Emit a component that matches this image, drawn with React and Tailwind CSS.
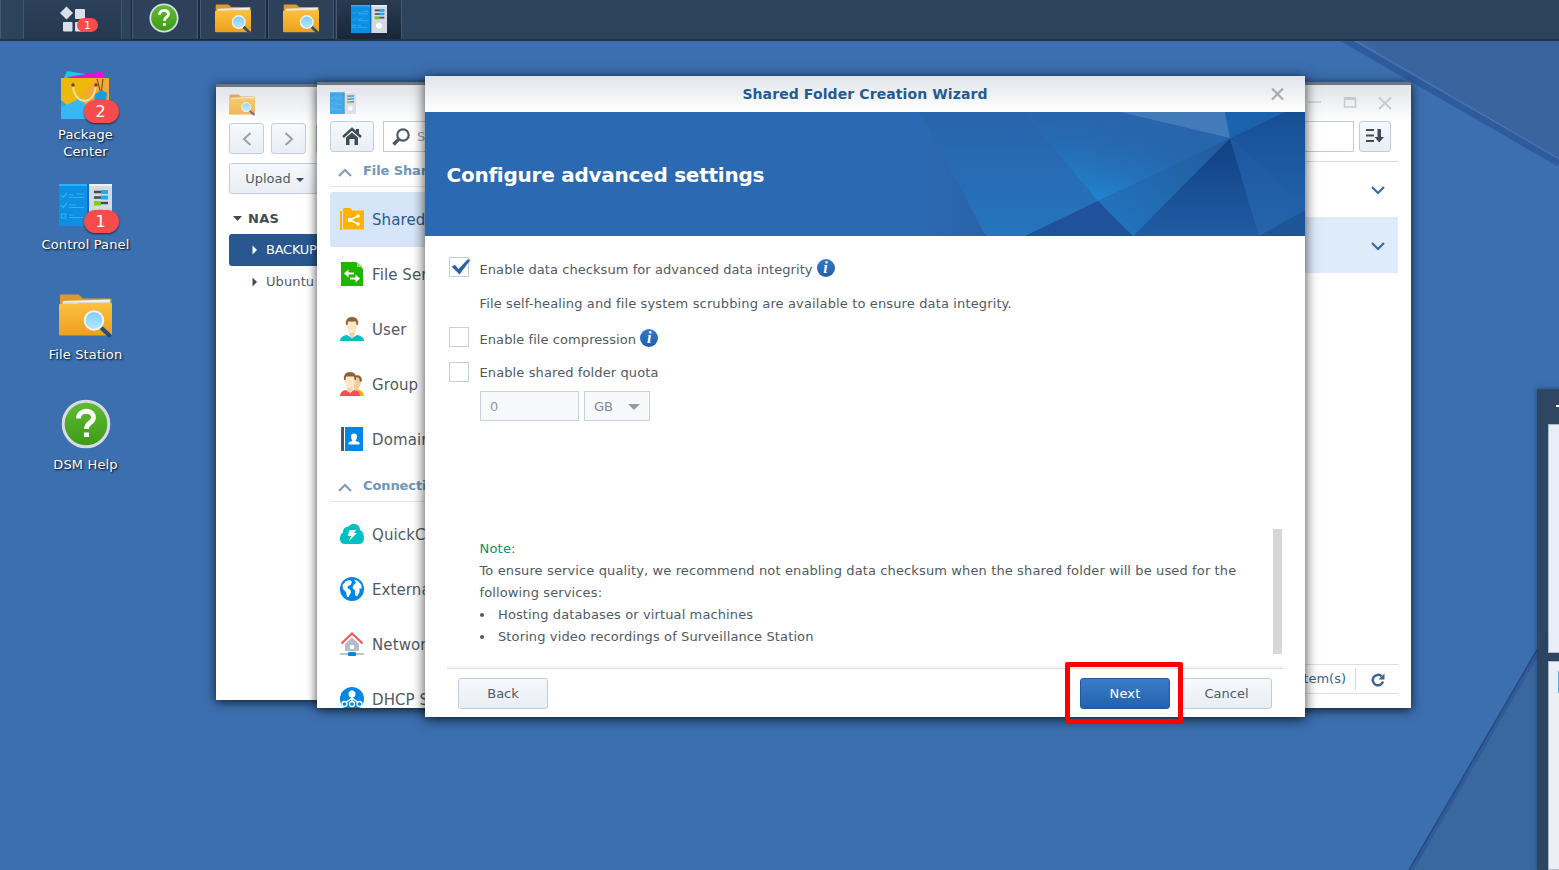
import React from "react";

function FolderIcon({ className }) {
  return (
    <svg className={className} viewBox="0 0 53 44">
      <defs>
        <linearGradient id="fold" x1="0" y1="0" x2="0" y2="1">
          <stop offset="0" stopColor="#fcc13f" />
          <stop offset="1" stopColor="#ee9f1d" />
        </linearGradient>
        <linearGradient id="lens" x1="0" y1="0" x2="0" y2="1">
          <stop offset="0" stopColor="#7cccfb" />
          <stop offset="1" stopColor="#b5e9ff" />
        </linearGradient>
      </defs>
      <path d="M1 1.500Q1 .5 2 .5H19.5L24 4.5H51.500Q52.500 4.500 52.500 5.500V20H1Z" fill="#dc9a2c" />
      <path d="M4 7L51 5.500V14H3Z" fill="#f4f1ea" />
      <path d="M5 9H51" stroke="#b9b6ae" strokeWidth=".7" />
      <path d="M0 11Q0 10 1 10H17L21 9H52Q53 9 53 10V40Q53 41.500 51.500 41.500H1.500Q0 41.500 0 40Z" fill="url(#fold)" />
      <path d="M43 34.500L50.500 41.500" stroke="#244f72" strokeWidth="4" strokeLinecap="round" />
      <circle cx="35" cy="26.500" r="9.300" fill="url(#lens)" stroke="#f3f3f3" strokeWidth="1.900" />
    </svg>
  );
}

function PanelIcon({ className }) {
  return (
    <svg className={className} viewBox="0 0 53 42" preserveAspectRatio="none">
      <rect width="30" height="42" fill="#0d8fe4" />
      <rect width="30" height="2" fill="#28b4f6" />
      <path d="M28 0H30V42H28Z" fill="#0a6cc0" />
      <g stroke="#2ab4f2" strokeWidth="1.200" fill="none">
        <path d="M2 11L4 13.500L8 9M10 11H15M10 13.500H25M17 10H25M2 21L4 23.500L8 19M10 21H17M10 23.500H25M2.500 30H6.500V34H2.500ZM10 31H15M10 33.500H24" />
      </g>
      <rect x="30" width="23" height="42" fill="#d5d9e2" />
      <rect x="30" width="23" height="2" fill="#eef0f4" />
      <path d="M35 8H49M35 13.500H49M35 19H49" stroke="#424b57" strokeWidth="2.500" />
      <path d="M42 8H49M42 13.500H49" stroke="#19b0ef" strokeWidth="4" />
      <path d="M35 19.500H42" stroke="#77cf13" strokeWidth="4" />
      <circle cx="41.500" cy="31" r="5.500" fill="#fff" stroke="#b9c0ca" />
    </svg>
  );
}

function HelpIcon({ className }) {
  return (
    <svg className={className} viewBox="0 0 50 50">
      <defs>
        <linearGradient id="hg" x1="0" y1="0" x2="0" y2="1">
          <stop offset="0" stopColor="#62bb33" />
          <stop offset="1" stopColor="#3d9a17" />
        </linearGradient>
      </defs>
      <circle cx="25" cy="25" r="22.800" fill="url(#hg)" stroke="#d5dce5" strokeWidth="3" />
      <path d="M17.500 19.500C17.500 10 32.500 10 32.500 18.500C32.500 24 25.500 23.500 25.500 30" fill="none" stroke="#fff" strokeWidth="4.800" />
      <rect x="23" y="33.500" width="5" height="4.500" fill="#fff" />
    </svg>
  );
}

function PackageIcon({ className }) {
  return (
    <svg className={className} viewBox="0 0 50 50">
      <path d="M4 8L7 1L26 4V12H4Z" fill="#25c2ee" />
      <path d="M8 7L43 1.500L45 9H8Z" fill="#e012d5" />
      <path d="M1 8H49V49H1Z" fill="#edb90c" />
      <path d="M36 8H49V49H34L20 28Z" fill="#f6a835" />
      <path d="M1 37L24 27L40 49H1Z" fill="#f0bd10" />
      <path d="M1 30L24 49H1Z" fill="#2cabf0" />
      <path d="M1 38L20 28L38 49H1Z" fill="#38b6f6" />
      <path d="M13 15C14 36 35 36 36 15" fill="none" stroke="#f8dfae" strokeWidth="1.800" />
      <circle cx="13" cy="15" r="1.700" fill="#6b430d" />
      <circle cx="36" cy="15" r="1.700" fill="#6b430d" />
      <path d="M37 9L41 24M43 9L41 24" stroke="#5c4523" strokeWidth="1" fill="none" />
      <path d="M35 24L42 20L47 23L46 34L34 32Z" fill="#189fd8" />
    </svg>
  );
}

function Badge({ children }) {
  return (
    <span className="absolute top-[38px] left-[84px] flex h-[23px] w-[35px] items-center justify-center rounded-full bg-[#f84c4c] pr-[2px] text-[16px] leading-none text-white shadow-[0_1px_2px_rgba(0,0,0,0.6)]">
      {children}
    </span>
  );
}

function DesktopIcon({ icon, label, badge }) {
  return (
    <div className="relative flex h-[110px] w-[171px] flex-col items-center">
      <div className="flex h-[64px] shrink-0 items-center">{icon}</div>
      <div className="w-[100px] text-center text-[13px] leading-[17px] tracking-[0.13px] text-white [text-shadow:1px_1px_2px_rgba(0,0,0,0.95)]">{label}</div>
      {badge && <Badge>{badge}</Badge>}
    </div>
  );
}

function Taskbar() {
  const task = "flex w-[66px] items-center justify-center border-x border-[#46596f] bg-[#2d415b] shadow-[0_0_0_1px_#182a3f]";
  return (
    <header className="flex h-[41px] border-b-2 border-[#20344b] bg-[#2d425b]">
      <div className="w-[23px] border-l border-[#455970]" />
      <div className="relative w-[99px] border-x border-[#43566c] bg-linear-to-b from-[#2d405a] to-[#26384d]">
        <svg className="absolute top-[6px] left-[36px] h-[26px] w-[27px]" viewBox="0 0 27 26">
          <g fill="#d9e0e9">
            <path d="M6.500 .5L13 7L6.500 13.500L0 7Z" />
            <rect x="15" y="3" width="10" height="10" rx="1" />
            <rect x="3" y="16" width="9.500" height="9.500" rx="1" />
            <rect x="15" y="16" width="10" height="9.500" rx="1" />
          </g>
        </svg>
        <span className="absolute top-[18px] left-[53px] flex h-[14px] w-[21px] items-center justify-center rounded-full bg-[#f84c4c] text-[11px] leading-none text-white">1</span>
      </div>
      <div className="ml-[10px] flex gap-[2px]">
        <div className={task}><HelpIcon className="mr-[2px] mb-[3px] h-[30px] w-[30px]" /></div>
        <div className={task}><FolderIcon className="mb-[2px] h-[30px] w-[36px]" /></div>
        <div className={task}><FolderIcon className="mb-[2px] h-[30px] w-[36px]" /></div>
        <div className="flex w-[66px] items-center justify-center border-x border-[#46596f] bg-linear-to-b from-[#2a3b52] to-[#192638]"><PanelIcon className="mb-px h-[28px] w-[36px]" /></div>
      </div>
    </header>
  );
}

const btn = "flex shrink-0 items-center justify-center rounded-[3px] border border-[#c0cddb] bg-linear-to-b from-[#f6f9fd] to-[#e9eef4]";

function FileStationWindow() {
  return (
    <section className="absolute top-[84px] left-[216px] flex h-[616px] w-[700px] flex-col border-t-[3px] border-[#6e7680] bg-white bg-linear-to-b from-[#e0e3e8] to-white to-[36px] pl-[13px] shadow-[0_2px_10px_rgba(0,0,0,0.75)]">
      <div className="flex h-[36px] items-center">
        <FolderIcon className="h-[22px] w-[26px] opacity-75" />
      </div>
      <div className="flex gap-[7px]">
        <div className={btn + " h-[31px] w-[35px]"}>
          <svg className="h-[14px] w-[10px]" viewBox="0 0 10 14"><path d="M8.500 1L2 7L8.500 13" fill="none" stroke="#9aa3ad" strokeWidth="2" /></svg>
        </div>
        <div className={btn + " h-[31px] w-[35px]"}>
          <svg className="h-[14px] w-[10px]" viewBox="0 0 10 14"><path d="M1.500 1L8 7L1.500 13" fill="none" stroke="#9aa3ad" strokeWidth="2" /></svg>
        </div>
        <div className={btn + " ml-[3px] h-[31px] w-[35px]"} />
      </div>
      <div className={btn + " mt-[9px] h-[31px] w-[92px] gap-[5px] pr-px text-[13px] text-[#505a64]"}>
        <span>Upload</span>
        <svg className="mt-[2px] h-[4px] w-[8px]" viewBox="0 0 8 4"><path d="M0 0H8L4 4Z" fill="#414b55" /></svg>
      </div>
      <div className="mt-[8px] flex h-[32px] items-center gap-[6px] pl-[4px] font-bold text-[#414b55]">
        <svg className="h-[5px] w-[9px]" viewBox="0 0 9 5"><path d="M0 0H9L4.500 5Z" fill="#414b55" /></svg>
        <span className="pt-[2px] text-[13px] tracking-[0.3px]">NAS</span>
      </div>
      <div className="flex h-[32px] w-[200px] items-center gap-[6px] rounded-[3px] bg-[#28588f] pl-[21px] text-[13px] tracking-[-0.25px] text-white">
        <svg className="h-[10px] w-[10px]" viewBox="0 0 10 10"><path d="M2.500 .5L7 5L2.500 9.500Z" fill="#fff" /></svg>
        <span>BACKUP</span>
      </div>
      <div className="flex h-[32px] items-center gap-[6px] pl-[21px] text-[13px] tracking-[0.1px] text-[#505a64]">
        <svg className="h-[10px] w-[10px]" viewBox="0 0 10 10"><path d="M2.500 .5L7 5L2.500 9.500Z" fill="#414b55" /></svg>
        <span>Ubuntu</span>
      </div>
    </section>
  );
}

const navIcons = {
  shared: (
    <>
      <path d="M0 4H2V23H0Z" fill="#ffb200" />
      <path d="M3 2Q3 1 4 1H10L12.500 3.500H24V22.500H3Z" fill="#ffb200" />
      <path d="M18 9L10 13L18 17" stroke="#fff" strokeWidth="1.600" fill="none" />
      <circle cx="10" cy="13" r="2.300" fill="#fff" /><circle cx="18" cy="9" r="1.800" fill="#fff" /><circle cx="18" cy="17" r="1.800" fill="#fff" />
    </>
  ),
  file: (
    <>
      <path d="M1 0H16L23 7V24H1Z" fill="#1fb600" />
      <path d="M17 0L23 5H17Z" fill="#8ddb80" />
      <path d="M4 11.500L8.500 7.500V10.500H14V12.500H8.500V15.500ZM20 16.500L15.500 12.500V15.500H10V17.500H15.500V20.500Z" fill="#fff" />
    </>
  ),
  user: (
    <>
      <path d="M0 24Q0 19 7 18L12 21L17 18Q24 19 24 24Z" fill="#00bfc2" />
      <path d="M9 14H15V18L12 21.500L9 18Z" fill="#f5d5b0" />
      <path d="M7 5Q7 2 12 2Q17 2 17 5V10Q16 16 12 16Q8 16 7 10Z" fill="#ffe6c8" />
      <path d="M6 8Q5 0 12 0Q19 0 18 8L16.500 8L16 4.500H8L7.500 8Z" fill="#8c6239" />
    </>
  ),
  group: (
    <>
      <path d="M14 24L17 17Q24 19 24 24Z" fill="#ffb200" />
      <path d="M13 5Q21 1 21 9Q20 16 17 18H14Z" fill="#f2cd9f" />
      <path d="M13 4Q22 1 22 9L20 10L19 6Z" fill="#8c6239" />
      <path d="M0 24Q0 19 6 18L10 21L14 18Q20 19 20 24Z" fill="#fb4b53" />
      <path d="M7 13H13V18L10 21.500L7 18Z" fill="#f5d5b0" />
      <path d="M5 5Q5 2 10 2Q15 2 15 5V10Q14 16 10 16Q6 16 5 10Z" fill="#ffe6c8" />
      <path d="M4 8Q3 0 10 0Q17 0 16 8L14.500 8L14 4.500H6L5.500 8Z" fill="#8c6239" />
    </>
  ),
  domain: (
    <>
      <path d="M1 0H4V24H1Z" fill="#4b5763" />
      <path d="M5 0H23V24H5Z" fill="#0086e5" />
      <path d="M8.500 17.500V15.500Q9 14.500 12.500 14Q11 12 11 9.500Q11 6.500 14 6.500Q17 6.500 17 9.500Q17 12 15.500 14Q19 14.500 19.500 15.500V17.500Z" fill="#fff" />
    </>
  ),
  quick: (
    <>
      <path d="M5 22Q0 22 0 16.500Q0 12 3 10.500Q3 5 8.500 4.500Q11 1 15 2Q20 3 20 8Q24 10 24 16Q24 22 18.500 22Z" fill="#00bfc2" />
      <path d="M9.500 8H16L14 11H17L9 19L11 14H7.500Z" fill="#fff" />
    </>
  ),
  globe: (
    <>
      <circle cx="12" cy="12" r="12" fill="#0086e5" />
      <path d="M2.500 8L6 4L10 3L12 5L10.500 8L8 9L7.500 11L10.500 13L11 15.500L8.500 20L7 20L6 15L3 12ZM14 2.500L18 4L21.500 8L21.500 12L19.500 11L19.500 15L17 19.500L15 18L15 13.500L12.500 11L13.500 8L16 6Z" fill="#fff" />
    </>
  ),
  network: (
    <>
      <path d="M5 12L12 5.500L19 12V19H5Z" fill="#b4bdc8" />
      <path d="M10 13H14V17H10Z" fill="#fff" />
      <path d="M1.500 11.500L12 1.500L22.500 11.500" fill="none" stroke="#fb555b" strokeWidth="2" />
      <path d="M0 22H24" stroke="#a6b2bf" strokeWidth="1.500" />
      <rect x="8" y="20" width="8" height="4" rx="1" fill="#0086e5" />
    </>
  ),
  dhcp: (
    <>
      <circle cx="12" cy="12" r="12" fill="#0086e5" />
      <path d="M12 8V17M12 11L4 17M12 11L20 17" stroke="#fff" strokeWidth="1.500" />
      <circle cx="12" cy="7" r="3.500" fill="#fff" />
      <g fill="#0086e5" stroke="#fff" strokeWidth="1.300"><circle cx="4.500" cy="17" r="2.500" /><circle cx="12" cy="17" r="2.500" /><circle cx="19.500" cy="17" r="2.500" /></g>
    </>
  ),
};

function NavItem({ icon, label, active }) {
  return (
    <div className={active ? "flex h-[55px] items-center gap-[8px] rounded-[3px] bg-[#d6e6f8] pl-[10px] text-[15px] text-[#28588f]" : "flex h-[55px] items-center gap-[8px] pl-[10px] text-[15px] text-[#505a64]"}>
      <svg className="mb-px h-[24px] w-[24px] shrink-0" viewBox="0 0 24 24">{navIcons[icon]}</svg>
      <span className="overflow-hidden pt-[2px] tracking-[0.1px] whitespace-nowrap">{label}</span>
    </div>
  );
}

function NavHeader({ children }) {
  return (
    <div className="flex h-[35px] shrink-0 items-center gap-[11px] border-b border-[#e2e6ea] pl-[8px] text-[13px] font-bold tracking-[-0.1px] text-[#6e96bd]">
      <svg className="mt-[6px] h-[9px] w-[14px] shrink-0" viewBox="0 0 14 9"><path d="M1 8L7 2L13 8" fill="none" stroke="#7e9ab8" strokeWidth="2" /></svg>
      <span className="overflow-hidden pt-[3px] whitespace-nowrap">{children}</span>
    </div>
  );
}

function Chevron() {
  return (
    <svg className="mt-[2px] h-[9px] w-[14px]" viewBox="0 0 14 9"><path d="M1 1L7 7L13 1" fill="none" stroke="#3665a0" strokeWidth="2" /></svg>
  );
}

function ControlPanelWindow() {
  return (
    <section className="absolute top-[82px] left-[317px] flex h-[626px] w-[1094px] flex-col overflow-hidden border-t-[3px] border-[#6e7680] bg-white bg-linear-to-b from-[#e0e3e8] to-white to-[36px] px-[13px]">
      <div className="flex h-[36px] shrink-0 items-center justify-between">
        <PanelIcon className="mb-px h-[22px] w-[26px] opacity-75" />
        <div className="flex items-center gap-[21px] pr-[6px]">
          <svg className="h-[14px] w-[14px]" viewBox="0 0 14 14"><path d="M0 6H13" stroke="#c8cacd" strokeWidth="1.500" /></svg>
          <svg className="h-[14px] w-[14px]" viewBox="0 0 14 14"><path d="M1.500 2V11H12.500V2Z" fill="none" stroke="#c8cacd" strokeWidth="1.500" /><path d="M1 2.500H13" stroke="#c8cacd" strokeWidth="3" /></svg>
          <svg className="h-[13px] w-[14px]" viewBox="0 0 14 13"><path d="M1 .5L13 12M13 .5L1 12" stroke="#c8cacd" strokeWidth="2" /></svg>
        </div>
      </div>
      <div className="flex h-[31px] shrink-0 items-center">
        <div className={btn + " h-[31px] w-[44px]"}>
          <svg className="h-[19px] w-[20px]" viewBox="0 0 20 19">
            <path d="M1 10L10 2L19 10" fill="none" stroke="#414b55" strokeWidth="2.500" />
            <path d="M14 2H17V7L14 4.500ZM4 10.500L10 5.500L16 10.500V18H12.500V12H7.500V18H4Z" fill="#414b55" />
          </svg>
        </div>
        <div className="ml-[9px] flex h-[31px] w-[971px] items-center gap-[7px] border border-[#c0cad6] bg-white pl-[8px] text-[13px] text-[#9aa3ad]">
          <svg className="h-[18px] w-[18px]" viewBox="0 0 18 18"><circle cx="11" cy="7" r="5.700" fill="none" stroke="#505a64" strokeWidth="2.200" /><path d="M7 11L1.500 16.500" stroke="#505a64" strokeWidth="3.500" /></svg>
          <span className="pt-px">Search</span>
        </div>
        <div className={btn + " ml-[5px] h-[31px] w-[32px]"}>
          <svg className="mr-px mb-[2px] h-[15px] w-[18px]" viewBox="0 0 18 15"><path d="M0 2H8M0 7.500H8M0 13H8" stroke="#414b55" strokeWidth="2" /><path d="M11.500 1H15V9H18L13.200 14.500L8.500 9H11.500Z" fill="#414b55" /></svg>
        </div>
      </div>
      <div className="flex min-h-0 flex-1">
        <nav className="flex w-[140px] flex-col">
          <NavHeader>File Sharing</NavHeader>
          <div className="mt-[5px]">
            <NavItem icon="shared" label="Shared Folder" active />
            <NavItem icon="file" label="File Services" />
            <NavItem icon="user" label="User" />
            <NavItem icon="group" label="Group" />
            <NavItem icon="domain" label="Domain/LDAP" />
          </div>
          <NavHeader>Connectivity</NavHeader>
          <div className="mt-[5px]">
            <NavItem icon="quick" label="QuickConnect" />
            <NavItem icon="globe" label="External Access" />
            <NavItem icon="network" label="Network" />
            <NavItem icon="dhcp" label="DHCP Server" />
          </div>
        </nav>
        <div className="mt-[9px] flex flex-1 flex-col border-t border-[#d3dce6]">
          <div className="flex h-[55px] items-center justify-end pr-[13px]"><Chevron /></div>
          <div className="flex h-[56px] items-center justify-end bg-[#deebfa] pr-[13px]"><Chevron /></div>
          <div className="mt-auto mb-[14px] flex h-[30px] items-center justify-end border-y border-[#d8e0e9] pr-[13px] text-[13px] text-[#365f93]">
            <span>2 item(s)</span>
            <span className="mr-[15px] ml-[9px] h-[22px] w-px bg-[#d0dae6]" />
            <svg className="mt-[2px] h-[14px] w-[14px]" viewBox="0 0 14 14"><path d="M12 8.500A5.200 5.200 0 1 1 10.500 3.200" fill="none" stroke="#3b6394" strokeWidth="2.500" /><path d="M13.500 .5V6.500H7.500Z" fill="#3b6394" /></svg>
          </div>
        </div>
      </div>
    </section>
  );
}

function BannerArt() {
  return (
    <svg className="absolute inset-y-0 right-0 h-[124px] w-[425px]" viewBox="0 0 425 124">
      <defs>
        <linearGradient id="b1" x1="0" y1="0" x2="0" y2="1"><stop offset="0" stopColor="#2963aa" /><stop offset="1" stopColor="#2575bf" /></linearGradient>
        <linearGradient id="b2" gradientUnits="userSpaceOnUse" x1="290" y1="0" x2="218" y2="89"><stop offset=".2" stopColor="#2466ad" /><stop offset="1" stopColor="#1f86d0" /></linearGradient>
        <linearGradient id="b2fade" gradientUnits="userSpaceOnUse" x1="145" y1="0" x2="145" y2="89"><stop offset="0" stopColor="#2865ac" /><stop offset=".3" stopColor="#2865ac" stopOpacity=".8" /><stop offset="1" stopColor="#2865ac" stopOpacity="0" /></linearGradient>
        <linearGradient id="b3" x1="1" y1="0" x2="0" y2="1"><stop offset="0" stopColor="#24599b" /><stop offset="1" stopColor="#2177c2" /></linearGradient>
        <linearGradient id="b4" x1="0" y1="0" x2="0" y2="1"><stop offset="0" stopColor="#104086" /><stop offset="1" stopColor="#205ca2" /></linearGradient>
        <linearGradient id="b5" x1="0" y1="0" x2="0" y2="1"><stop offset="0" stopColor="#1d579e" /><stop offset="1" stopColor="#2465ac" /></linearGradient>
        <linearGradient id="b6" x1="0" y1="0" x2="1" y2="0"><stop offset="0" stopColor="#2c6bb4" stopOpacity="0" /><stop offset="1" stopColor="#2961a7" /></linearGradient>
        <linearGradient id="b7" x1="0" y1="0" x2="0" y2="1"><stop offset="0" stopColor="#174f94" /><stop offset="1" stopColor="#2062aa" /></linearGradient>
      </defs>
      <path d="M0 0H40L106 124H0Z" fill="url(#b6)" />
      <path d="M40 0H240L350 26L218 89L145 124H106Z" fill="url(#b1)" />
      <path d="M145 0H240L350 26L218 89Z" fill="url(#b2)" />
      <path d="M145 0H240L350 26L218 89Z" fill="url(#b2fade)" />
      <path d="M240 0H345L350 26Z" fill="#427bb8" />
      <path d="M345 0H405L350 26Z" fill="#1c63af" />
      <path d="M405 0H425V98L350 26Z" fill="url(#b7)" />
      <path d="M350 26L425 98L379 124Z" fill="url(#b5)" />
      <path d="M425 98V124H379Z" fill="#1d5696" />
      <path d="M350 26L379 124H253Z" fill="url(#b4)" />
      <path d="M350 26L253 124L218 89Z" fill="url(#b3)" />
      <path d="M218 89L253 124H145Z" fill="#1f529a" />
    </svg>
  );
}

function Checkbox({ checked }) {
  return (
    <span className="flex h-[20px] w-[20px] shrink-0 border border-[#c6d0db] bg-white">
      {checked && (
        <svg className="h-[19px] w-[21px] shrink-0" viewBox="0 0 21 19"><path d="M1.500 8.500L5 7L8.500 11L17.500 1.500L20.500 1.800L9.500 16.500Z" fill="#2863a4" /></svg>
      )}
    </span>
  );
}

function InfoIcon() {
  return (
    <span className="mb-[4px] flex h-[18px] w-[18px] items-center justify-center rounded-full bg-linear-to-b from-[#3578c8] to-[#1f5eae] font-['Liberation_Serif',serif] text-[16px] leading-none font-bold text-white italic">i</span>
  );
}

function Wizard() {
  return (
    <section className="absolute top-[76px] left-[425px] flex h-[641px] w-[880px] flex-col bg-white text-[13px] text-[#505a64] shadow-[0_2px_12px_rgba(0,0,0,0.75)]">
      <div className="relative flex h-[36px] shrink-0 items-center justify-center bg-linear-to-b from-[#e0e4ea] to-white text-[14px] font-bold text-[#275a93]">
        <span className="tracking-[0.1px]">Shared Folder Creation Wizard</span>
        <svg className="absolute top-[12px] right-[21px] h-[13px] w-[13px]" viewBox="0 0 13 13"><path d="M1 .5L12 11.500M12 .5L1 11.500" stroke="#a8acb1" strokeWidth="2.200" /></svg>
      </div>
      <div className="relative flex h-[124px] shrink-0 items-center bg-[#2b6ab3] pl-[21.500px]">
        <BannerArt />
        <h1 className="relative pt-[2px] text-[20px] font-bold tracking-[-0.25px] text-white">Configure advanced settings</h1>
      </div>
      <div className="flex flex-1 flex-col px-[22px]">
        <div className="mt-[20px] flex h-[22px] items-center gap-[10.500px] pl-[2px]">
          <Checkbox checked />
          <div className="flex items-center gap-[4px] pt-[5px]"><span className="tracking-[0.07px]">Enable data checksum for advanced data integrity</span><InfoIcon /></div>
        </div>
        <p className="mt-[16px] pl-[32.500px] leading-[20px] tracking-[0.137px]">File self-healing and file system scrubbing are available to ensure data integrity.</p>
        <div className="mt-[12px] flex h-[22px] items-center gap-[10.500px] pl-[2px]">
          <Checkbox />
          <div className="flex items-center gap-[4px] pt-[5px]"><span className="tracking-[0.08px]">Enable file compression</span><InfoIcon /></div>
        </div>
        <div className="mt-[13px] flex h-[22px] items-center gap-[10.500px] pl-[2px]">
          <Checkbox />
          <span className="pt-[2px] tracking-[0.11px]">Enable shared folder quota</span>
        </div>
        <div className="mt-[8px] flex gap-[5px] pl-[33px] text-[#9299a2]">
          <div className="flex h-[30px] w-[99px] items-center border border-[#c4d0dd] bg-[#f6f8fa] pt-[2px] pl-[9px]">0</div>
          <div className="flex h-[30px] w-[66px] items-center justify-between border border-[#c4d0dd] bg-[#f6f8fa] pt-px pr-[9px] pl-[9px]">
            <span className="pt-px text-[#808891]">GB</span>
            <svg className="h-[6px] w-[12px]" viewBox="0 0 12 6"><path d="M0 0H12L6 6Z" fill="#929ca7" /></svg>
          </div>
        </div>
        <div className="mt-[108px] flex h-[125px] justify-between pl-[32.500px]">
          <div className="pt-[9px] leading-[22px]">
            <p className="tracking-[0.2px] text-[#089064]">Note:</p>
            <p className="w-[775px] tracking-[0.123px]">To ensure service quality, we recommend not enabling data checksum when the shared folder will be used for the following services:</p>
            <ul className="tracking-[0.12px]">
              <li className="flex items-center gap-[14px] pl-[.5px]"><span className="h-[4px] w-[4px] rounded-full bg-[#505a64]" />Hosting databases or virtual machines</li>
              <li className="flex items-center gap-[14px] pl-[.5px]"><span className="h-[4px] w-[4px] rounded-full bg-[#505a64]" />Storing video recordings of Surveillance Station</li>
            </ul>
          </div>
          <div className="mr-px w-[9px] bg-[#d6d7d9]" />
        </div>
        <footer className="mt-[12px] border-t-2 border-[#f5f5f6]">
          <div className="flex border-t border-[#d9dbdd] px-[11px] pt-[9px]">
            <button className={btn + " h-[31px] w-[90px]"}>Back</button>
            <button className="ml-auto h-[31px] w-[90px] rounded-[3px] border border-[#205a9d] bg-linear-to-b from-[#3a7dca] to-[#2362ab] tracking-[0.2px] text-white">Next</button>
            <button className={btn + " ml-[11px] h-[31px] w-[91px]"}>Cancel</button>
          </div>
        </footer>
      </div>
    </section>
  );
}

export default function App() {
  return (
    <main className="relative h-[870px] w-[1559px] overflow-hidden bg-[#3c6eb0] font-['DejaVu_Sans',Verdana,sans-serif]">
      <svg className="absolute inset-0 h-full w-full" viewBox="0 0 1559 870">
        <defs>
          <pattern id="grain" width="4" height="4" patternUnits="userSpaceOnUse"><path d="M0 0H1V1H0ZM2 2H3V3H2Z" fill="#327aa9" opacity=".3" /></pattern>
        </defs>
        <rect width="1559" height="870" fill="url(#grain)" />
        <path d="M1288 0H1559V158Z" fill="#3a649e" />
        <path d="M1276 0L1559 163" stroke="#2f5b9d" strokeWidth="7" />
        <path d="M1284 0L1559 159" stroke="#4f77ad" strokeWidth="1" />
        <path d="M1409 870L1559 612V870Z" fill="#3b679f" />
        <path d="M1411.500 870L1559 616" stroke="#315b98" strokeWidth="4" />
        <path d="M1409 870L1559 612" stroke="#274b7e" strokeWidth="1.500" />
      </svg>
      <div className="relative"><Taskbar /></div>
      <div className="relative mt-[21px] flex w-[171px] flex-col">
        <DesktopIcon icon={<PackageIcon className="mt-[2px] mr-[2px] h-[50px] w-[50px]" />} label={<>Package<br />Center</>} badge="2" />
        <DesktopIcon icon={<PanelIcon className="mt-[2px] h-[42px] w-[53px]" />} label="Control Panel" badge="1" />
        <DesktopIcon icon={<FolderIcon className="mt-[3px] h-[44px] w-[53px]" />} label="File Station" />
        <DesktopIcon icon={<HelpIcon className="h-[50px] w-[50px]" />} label="DSM Help" />
      </div>
      <aside className="absolute top-[389px] left-[1537px] flex h-[481px] w-[100px] flex-col bg-[#2d435e]/95 pl-[11px] shadow-[0_0_5px_rgba(20,40,70,0.5)]">
        <div className="flex h-[35px] items-center pl-[8px] text-white">
          <svg className="h-[10px] w-[10px]" viewBox="0 0 10 10"><path d="M0 4H10M5 0V10" stroke="#fff" strokeWidth="2" /></svg>
        </div>
        <div className="h-[229px] border border-[#aeb9c8] bg-[#e8eef7]" />
        <div className="mt-[8px] flex-1 border border-[#aeb9c8] bg-[#eceff5] pt-[9px] pl-[9px]">
          <div className="h-[22px] w-[20px] bg-[#55b5f8]" />
        </div>
      </aside>
      <FileStationWindow />
      <div className="absolute top-[82px] left-[317px] h-[626px] w-[1094px] shadow-[0_2px_10px_rgba(0,0,0,0.75)]" />
      <ControlPanelWindow />
      <Wizard />
      <div className="absolute top-[662px] left-[1065px] h-[62px] w-[118px] rounded-[2px] border-[5px] border-[#ff0000]" />
    </main>
  );
}
